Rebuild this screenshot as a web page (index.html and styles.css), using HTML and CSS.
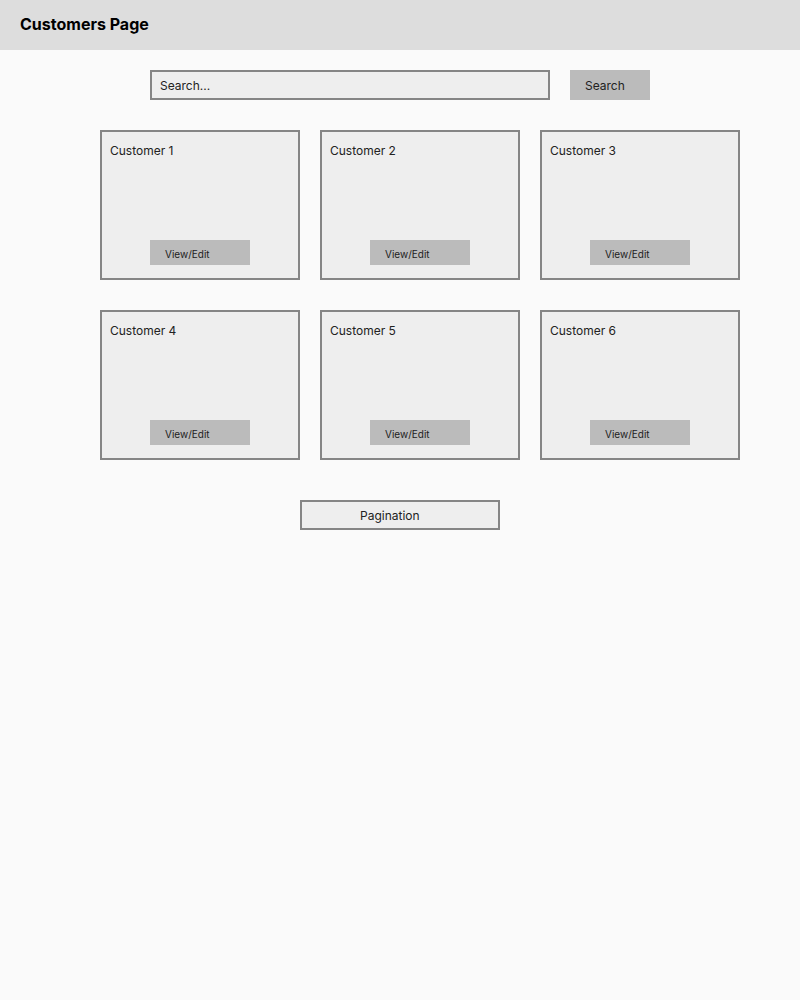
FILE: index.html
```html
<!DOCTYPE html>
<html>
<head>
<meta charset="utf-8">
<link rel="stylesheet" href="styles.css">
</head>
<body>
<header class="topbar"><h1 class="title">Customers Page</h1></header>
<div class="search-row">
  <div class="search-input">Search...</div>
  <div class="search-btn">Search</div>
</div>
<div class="cards">
  <div class="card"><div class="card-name">Customer 1</div><div class="card-btn">View/Edit</div></div>
  <div class="card"><div class="card-name">Customer 2</div><div class="card-btn">View/Edit</div></div>
  <div class="card"><div class="card-name">Customer 3</div><div class="card-btn">View/Edit</div></div>
  <div class="card"><div class="card-name">Customer 4</div><div class="card-btn">View/Edit</div></div>
  <div class="card"><div class="card-name">Customer 5</div><div class="card-btn">View/Edit</div></div>
  <div class="card"><div class="card-name">Customer 6</div><div class="card-btn">View/Edit</div></div>
</div>
<div class="pager-row"><div class="pager">Pagination</div></div>
</body>
</html>
```
FILE: styles.css
```css
* { box-sizing: border-box; }
html, body { margin: 0; padding: 0; }
body {
  background: #fafafa;
  font-family: Inter, "Noto Sans", sans-serif;
  color: #111;
  width: 800px;
  min-height: 1000px;
}
.topbar {
  height: 50px;
  background: #dddddd;
  display: flex;
  align-items: center;
  padding-left: 20px;
}
.title {
  margin: 0;
  font-size: 16px;
  font-weight: 700;
  color: #000;
  padding-bottom: 3px;
}
.search-row {
  display: flex;
  justify-content: center;
  gap: 20px;
  margin-top: 20px;
}
.search-input {
  width: 400px;
  height: 30px;
  border: 2px solid #858585;
  background: #eeeeee;
  font-size: 12px;
  padding-left: 8px;
  padding-top: 1px;
  display: flex;
  align-items: center;
  color: #222;
}
.search-btn {
  width: 80px;
  height: 30px;
  background: #bbbbbb;
  font-size: 12px;
  padding-left: 15px;
  padding-top: 1px;
  display: flex;
  align-items: center;
  color: #222;
}
.cards {
  display: grid;
  grid-template-columns: repeat(3, 200px);
  column-gap: 20px;
  row-gap: 30px;
  margin-top: 30px;
  padding-left: 100px;
}
.card {
  height: 150px;
  border: 2px solid #858585;
  background: #eeeeee;
  display: flex;
  flex-direction: column;
  justify-content: space-between;
  padding: 9px 8px 13px 8px;
}
.card-name {
  font-size: 12px;
  line-height: 20px;
  color: #222;
}
.card-btn {
  align-self: center;
  width: 100px;
  height: 25px;
  background: #bbbbbb;
  font-size: 10px;
  padding-left: 15px;
  display: flex;
  align-items: center;
  padding-top: 3px;
  color: #222;
}
.pager-row {
  display: flex;
  justify-content: center;
  margin-top: 40px;
}
.pager {
  width: 200px;
  height: 30px;
  border: 2px solid #858585;
  background: #eeeeee;
  font-size: 12px;
  padding-left: 58px;
  padding-top: 1px;
  display: flex;
  align-items: center;
  color: #222;
}
```
